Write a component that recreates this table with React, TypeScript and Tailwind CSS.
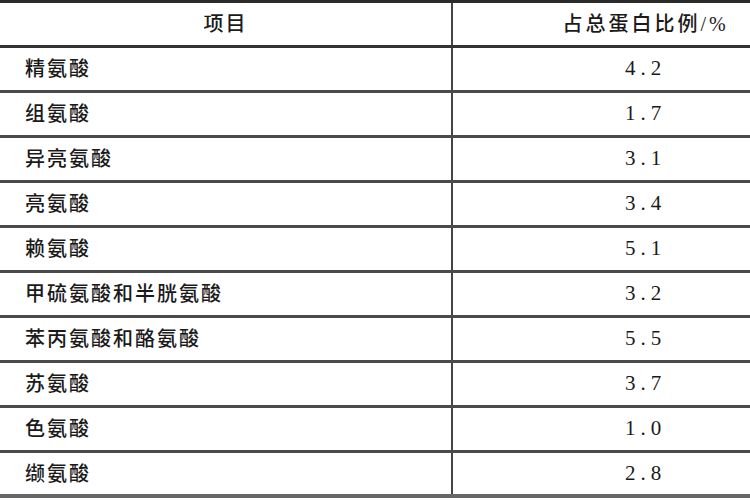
const rows: [string, string][] = [
  ["精氨酸", "4.2"],
  ["组氨酸", "1.7"],
  ["异亮氨酸", "3.1"],
  ["亮氨酸", "3.4"],
  ["赖氨酸", "5.1"],
  ["甲硫氨酸和半胱氨酸", "3.2"],
  ["苯丙氨酸和酪氨酸", "5.5"],
  ["苏氨酸", "3.7"],
  ["色氨酸", "1.0"],
  ["缬氨酸", "2.8"],
];

const cjk = "font-['Liberation_Serif','Noto_Sans_CJK_SC',serif]";

export default function App() {
  return (
    <div className={`w-[750px] h-[500px] bg-white text-[#1a1a1a] ${cjk} overflow-hidden`}>
      <div className="border-t-[3px] border-[#2b2b2b]">
        <div className="grid grid-cols-[453px_1fr] h-[45px] border-b-[3px] border-[#333]">
          <div className="flex items-center justify-center border-r-2 border-[#444] text-[20px] font-medium tracking-[2px]">
            项目
          </div>
          <div className="flex items-center justify-center pl-[88px] text-[20px] font-medium tracking-[3px]">
            占总蛋白比例/%
          </div>
        </div>
        {rows.map(([name, value], i) => (
          <div
            key={name}
            className={`grid grid-cols-[453px_1fr] h-[45px] ${
              i === rows.length - 1 ? "border-b-[4px] border-[#666]" : "border-b-[3px] border-[#4a4a4a]"
            }`}
          >
            <div className="flex items-center pl-[25px] border-r-2 border-[#444] text-[20px] font-medium tracking-[2px]">
              {name}
            </div>
            <div className="flex items-center justify-center pl-[88px] text-[21px] tracking-[5px]">
              {value}
            </div>
          </div>
        ))}
      </div>
    </div>
  );
}
